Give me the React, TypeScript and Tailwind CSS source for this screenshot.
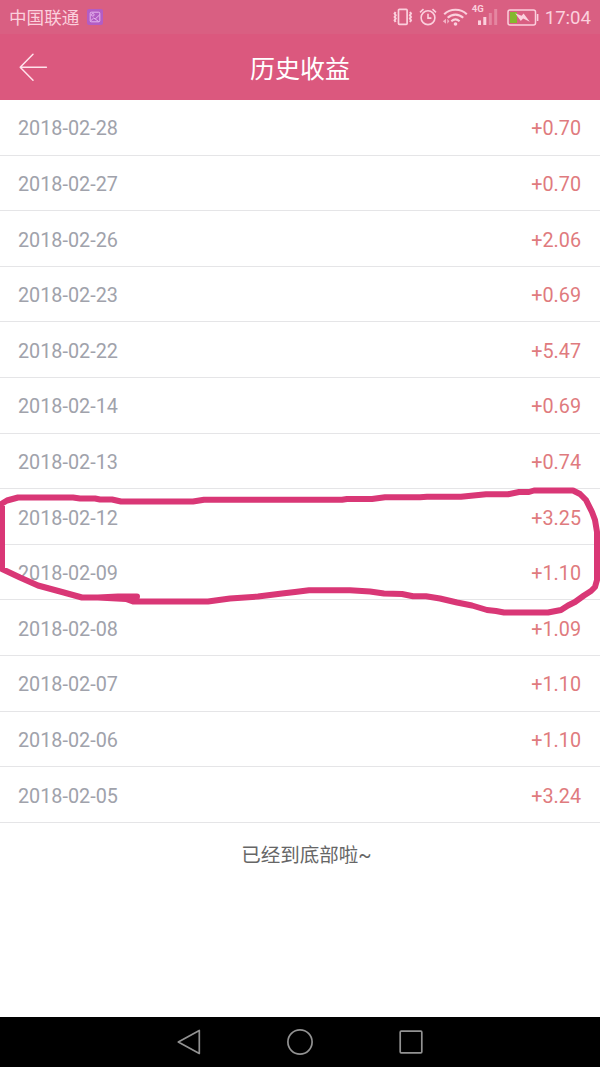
interface Income {
  date: string;
  amount: string;
}

const incomes: Income[] = [
  { date: '2018-02-28', amount: '+0.70' },
  { date: '2018-02-27', amount: '+0.70' },
  { date: '2018-02-26', amount: '+2.06' },
  { date: '2018-02-23', amount: '+0.69' },
  { date: '2018-02-22', amount: '+5.47' },
  { date: '2018-02-14', amount: '+0.69' },
  { date: '2018-02-13', amount: '+0.74' },
  { date: '2018-02-12', amount: '+3.25' },
  { date: '2018-02-09', amount: '+1.10' },
  { date: '2018-02-08', amount: '+1.09' },
  { date: '2018-02-07', amount: '+1.10' },
  { date: '2018-02-06', amount: '+1.10' },
  { date: '2018-02-05', amount: '+3.24' },
];

function VibrateIcon() {
  return (
    <svg width="20" height="18" viewBox="0 0 20 18" fill="none" stroke="currentColor" strokeWidth="1.7">
      <rect x="5.5" y="1.4" width="8.6" height="15" rx="0.8" />
      <path d="M2.6 4 1.6 5.5l1.1 1.7-1.1 1.7 1.1 1.7-1.1 1.7 1 1.7M17 4l1 1.5-1.1 1.7L18 8.9l-1.1 1.7 1.1 1.7-1 1.7" strokeWidth="2" />
    </svg>
  );
}

function AlarmIcon() {
  return (
    <svg width="18" height="18" viewBox="0 0 18 18" fill="none" stroke="currentColor" strokeWidth="1.6">
      <circle cx="9" cy="9.7" r="6.9" />
      <path d="M9 5.8v4.3h3.4M1 4.3 4.5 1.2M17 4.3l-3.5-3.1" />
    </svg>
  );
}

function WifiIcon() {
  return (
    <svg width="26" height="18" viewBox="0 0 26 18" fill="none" stroke="currentColor" strokeWidth="2.1">
      <path d="M2.2 6.2c6-6 16.6-6 22.6 0M5.7 9.8c4.5-4.3 11-4.3 15.5 0M9.3 13.2c2.5-2.2 5.8-2.2 8.3 0" />
      <circle cx="13.5" cy="16" r="1.8" fill="currentColor" stroke="none" />
      <path d="M4 10.8v5L.8 13.3zM5.3 10.8v5l2-2.5z" fill="currentColor" stroke="none" opacity=".75" />
    </svg>
  );
}

function SignalIcon() {
  return (
    <div className="relative h-[22px] w-[27px]">
      <span className="absolute left-0 top-0 text-[9.5px] leading-[9px] font-bold">4G</span>
      <svg className="absolute bottom-0 left-[6px]" width="21" height="18" viewBox="0 0 21 18" fill="currentColor">
        <rect x="0" y="12.4" width="3" height="4.6" />
        <rect x="5.3" y="9" width="3" height="8" />
        <rect x="10.8" y="5" width="3" height="12" opacity=".35" />
        <rect x="16.2" y="1" width="3" height="16" opacity=".35" />
      </svg>
    </div>
  );
}

function BatteryIcon() {
  return (
    <svg width="32" height="17" viewBox="0 0 32 17" fill="none">
      <rect x="3" y="3" width="7" height="11" fill="#84b82e" />
      <rect x="1" y="1" width="27.5" height="15" rx="2" stroke="currentColor" strokeWidth="1.5" />
      <path d="M30.6 5v7" stroke="currentColor" strokeWidth="1.6" />
      <path d="m8.2 4.2 6.4 2.6 2-2.4 6.2 8.3-6.7-3.3-2.3 2.5z" fill="currentColor" />
    </svg>
  );
}

function StatusBar() {
  return (
    <div className="flex h-[34px] items-center bg-[#d95f82] pl-[9px] pr-[9px] text-[#fbd0dd]">
      <span className="pt-[2px] text-[17.6px] leading-6">中国联通</span>
      <svg className="ml-[8px] -mt-px" width="16" height="16" viewBox="0 0 16 16" fill="none" stroke="#e6b5ef">
        <rect width="16" height="16" rx="2" fill="#b25dc5" stroke="none" />
        <rect x="3.2" y="3.2" width="9.6" height="9.6" rx="1" />
        <circle cx="5.8" cy="5.8" r="1.3" />
        <path d="m3.5 12 3.2-3 1.5 1 4.3-4M8.2 10l3.5 2.6" />
      </svg>
      <div className="ml-auto flex items-center">
        <VibrateIcon />
        <div className="ml-[6px]"><AlarmIcon /></div>
        <div className="ml-[5px]"><WifiIcon /></div>
        <div className="ml-[4px] -mt-[5px]"><SignalIcon /></div>
        <div className="ml-[8px]"><BatteryIcon /></div>
        <span className="ml-[6px] pt-px text-[18.6px] leading-6">17:04</span>
      </div>
    </div>
  );
}

function Header() {
  return (
    <header className="grid h-[66px] grid-cols-3 items-center bg-[#db587e] px-[19px] text-white">
      <button aria-label="返回" className="w-7">
        <svg width="29" height="29" viewBox="0 0 29 29" fill="none" stroke="#ffe3ec" strokeWidth="1.5" strokeLinecap="round" strokeLinejoin="round">
          <path d="M14 1.2 1.2 14.2 14 27.2M1.2 14.2h26.2" />
        </svg>
      </button>
      <h1 className="pt-[5px] text-center text-[25px]">历史收益</h1>
    </header>
  );
}

function IncomeRow({ date, amount }: Income) {
  return (
    <li className="flex h-[55.6px] items-center justify-between border-b border-[#e5e5e7] pt-[4px] pr-[19px] pl-[18px] text-[19.8px]">
      <span className="text-[#a0a2ab]">{date}</span>
      <span className="text-[#df7b7e]">{amount}</span>
    </li>
  );
}

// Hand-drawn loop around the 02-12 and 02-09 rows
function Scribble() {
  return (
    <svg className="pointer-events-none absolute left-0 top-[380px]" width="600" height="140" viewBox="0 480 600 140" fill="none" stroke="#d93776" strokeWidth="6" strokeLinecap="round" strokeLinejoin="round">
      <path d="M137 596.5H118L98 597.5H82L62 592 38 585.5 20 577.5 2 569V503.5L7 500.5 18 497.5H73L80 498.5H95L100 499.5H112L121 501.5H193L204 499.8H342L347 499H372L385 497.3H420L427 496.8H461L486 494.3H508L519 492H529L534 490.5H573L580 494 586 500 592 512 595 520 597 532V580L595 587 591 591 584 595.5 575 602 568 605.5 561 610 548 612.5H504L496 611 487 610 472 605.5 457 602.5 440 598.5 426 596.3H413L402 594 384 593.5 370 591.5 350 590.3H309L295 592 282 593.5 270 595 258 596.5 230 598.5 219 600 208 601.5H133L126 599 98 597.5 118 596.5" />
    </svg>
  );
}

function NavBar() {
  return (
    <nav className="flex h-[50px] items-center justify-center gap-[83px] bg-black text-[#929292]">
      <svg width="28" height="28" viewBox="0 0 28 28" fill="none" stroke="currentColor" strokeWidth="1.7" strokeLinejoin="round">
        <path d="M24.3 2.5v23L3.3 14z" />
      </svg>
      <svg width="28" height="28" viewBox="0 0 28 28" fill="none" stroke="currentColor" strokeWidth="1.7">
        <circle cx="14" cy="14" r="12.1" />
      </svg>
      <svg width="28" height="28" viewBox="0 0 28 28" fill="none" stroke="currentColor" strokeWidth="1.7">
        <rect x="3.2" y="3.2" width="21.6" height="21.6" rx="1" />
      </svg>
    </nav>
  );
}

export default function App() {
  return (
    <div className="flex h-[1067px] w-[600px] flex-col overflow-hidden bg-white font-[Roboto,'Noto_Sans_CJK_SC',sans-serif]">
      <StatusBar />
      <Header />
      <main className="relative flex-1">
        <ul>
          {incomes.map((item) => (
            <IncomeRow key={item.date} {...item} />
          ))}
        </ul>
        <p className="pt-[18px] pl-[13px] text-center text-[19.5px] text-[#666]">已经到底部啦~</p>
        <Scribble />
      </main>
      <NavBar />
    </div>
  );
}
